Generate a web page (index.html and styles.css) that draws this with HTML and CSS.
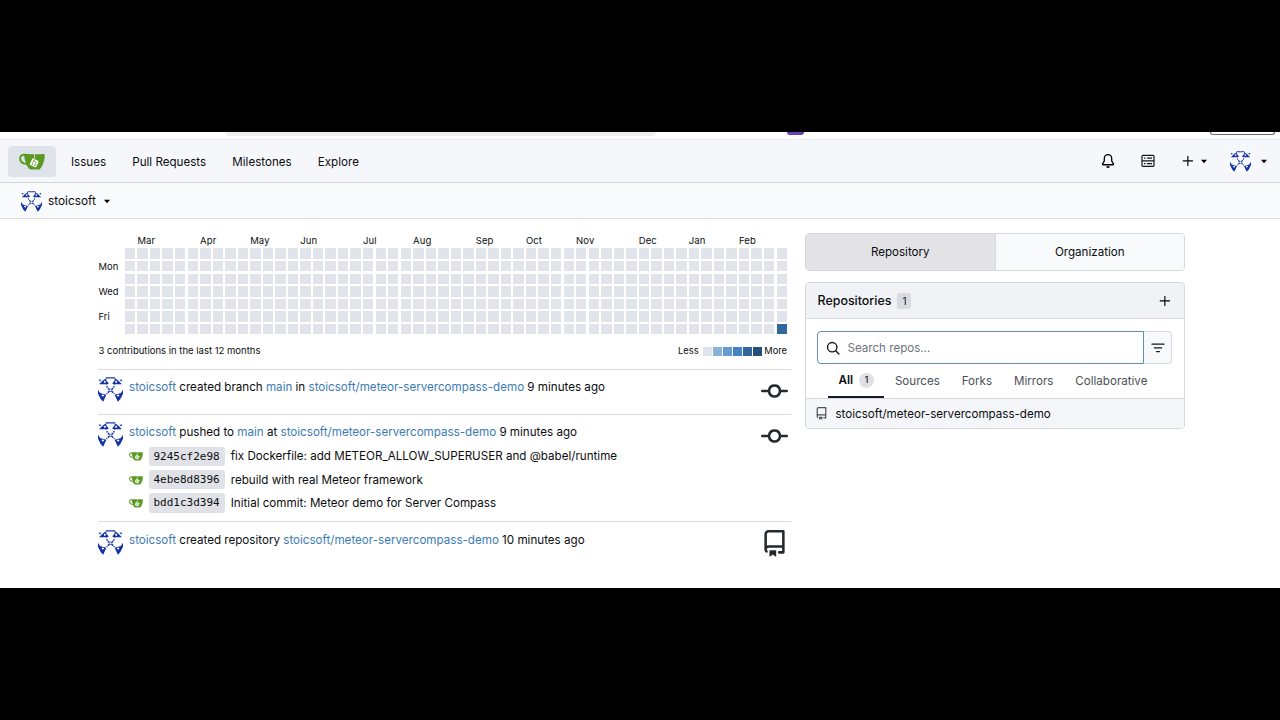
FILE: index.html
```
<!DOCTYPE html>
<html lang="en">
<head>
    <meta charset="UTF-8">
    <meta name="viewport" content="width=device-width, initial-scale=1.0">
    <title>stoicsoft - Dashboard - Gitea</title>
    <link rel="stylesheet" href="styles.css">
</head>
<body>

    <!-- shared icons -->
    <svg width="0" height="0" class="defs">
        <symbol id="gitea" viewBox="0 0 640 640">
            <path fill="#fff" d="m395.9 484.2-126.9-61c-12.5-6-17.9-21.2-11.8-33.8l61-126.9c6-12.5 21.2-17.9 33.8-11.8 17.2 8.3 27.1 13 27.1 13l-.1-109.2 16.7-.1.1 117.1s57.4 24.2 83.1 40.1c3.7 2.3 10.2 6.8 12.9 14.4 2.1 6.1 2 13.1-1 19.3l-61 126.9c-6.2 12.7-21.4 18.1-33.9 12"/>
            <path fill="#5b9a22" d="M622.7 149.8c-4.1-4.1-9.6-4-9.6-4s-117.2 6.6-177.9 8c-13.3.3-26.5.6-39.6.7v117.2c-5.5-2.6-11.1-5.3-16.6-7.9 0-36.4-.1-109.2-.1-109.2-29 .4-89.2-2.2-89.2-2.2s-141.4-7.1-156.8-8.5c-9.8-.6-22.5-2.1-39 1.5-8.7 1.8-33.5 7.4-53.8 26.9C-4.9 212.4 6.6 276.2 8 285.8c1.7 11.7 6.9 44.2 31.7 72.5 45.8 56.1 144.4 54.8 144.4 54.8s12.1 28.9 30.6 55.5c25 33.1 50.7 58.9 75.7 62 63 0 188.9-.1 188.9-.1s12 .1 28.3-10.3c14-8.5 26.5-23.4 26.5-23.4S547 483 565 451.5c5.5-9.7 10.1-19.1 14.1-28 0 0 55.2-117.1 55.2-231.1-1.1-34.5-9.6-40.6-11.6-42.6M125.6 353.9c-25.9-8.5-36.9-18.7-36.9-18.7S69.6 321.8 60 295.4c-16.5-44.2-1.4-71.2-1.4-71.2s8.4-22.5 38.5-30c13.8-3.7 31-3.1 31-3.1s7.1 59.4 15.7 94.2c7.2 29.2 24.8 77.7 24.8 77.7s-26.1-3.1-43-9.1m300.3 107.6s-6.1 14.5-19.6 15.4c-5.8.4-10.3-1.2-10.3-1.2s-.3-.1-5.3-2.1l-112.9-55s-10.9-5.7-12.8-15.6c-2.2-8.1 2.7-18.1 2.7-18.1L322 273s4.8-9.7 12.2-13c.6-.3 2.3-1 4.5-1.5 8.1-2.1 18 2.8 18 2.8L467.4 315s12.6 5.7 15.3 16.2c1.9 7.4-.5 14-1.8 17.2-6.3 15.4-55 113.1-55 113.1"/>
            <path fill="#5b9a22" d="M326.8 380.1c-8.2.1-15.4 5.8-17.3 13.8s2 16.3 9.1 20c7.7 4 17.5 1.8 22.7-5.4 5.1-7.1 4.3-16.9-1.8-23.1l24-49.1c1.5.1 3.7.2 6.2-.5 4.1-.9 7.1-3.6 7.1-3.6 4.2 1.8 8.6 3.8 13.2 6.1 4.8 2.4 9.3 4.9 13.4 7.3.9.5 1.8 1.1 2.8 1.9 1.6 1.3 3.4 3.1 4.7 5.5 1.9 5.5-1.9 14.9-1.9 14.9-2.3 7.6-18.4 40.6-18.4 40.6-8.1-.2-15.3 5-17.7 12.5-2.6 8.1 1.1 17.3 8.9 21.3s17.4 1.7 22.5-5.3c5-6.8 4.6-16.3-1.1-22.6 1.9-3.7 3.7-7.4 5.6-11.3 5-10.4 13.5-30.4 13.5-30.4.9-1.7 5.7-10.3 2.7-21.3-2.5-11.4-12.6-16.7-12.6-16.7-12.2-7.9-29.2-15.2-29.2-15.2s0-4.1-1.1-7.1c-1.1-3.1-2.8-5.1-3.9-6.3 4.7-9.7 9.4-19.3 14.1-29-4.1-2-8.1-4-12.2-6.1-4.8 9.8-9.7 19.7-14.5 29.5-6.7-.1-12.9 3.5-16.1 9.4-3.4 6.3-2.7 14.1 1.9 19.8z"/>
        </symbol>
        <symbol id="identicon-half" viewBox="0 0 36 72" overflow="visible">
            <path fill-rule="evenodd" d="M3 21 13 11 24 3v7l7 9-7 3-3-1zM16 14l4 4 3-4-3-4z"/>
            <path d="M2 7l8 1-5 5zM22 1h14v3H24z"/>
            <path d="M24 26h4v4h-4zM28 31h4v3h4v2h-3v5h3v2h-4v3h-4v-5h3v-5h-3zM24 46h3v4h-3z"/>
            <path fill-rule="evenodd" d="M0 37l6 9 18 5-9 20L8 64 0 48zM10 53l4 4 4-4-4-3z"/>
        </symbol>
        <symbol id="avatar" viewBox="0 0 72 72">
            <rect width="72" height="72" fill="#fff" fill-opacity=".6"/>
            <g fill="#1333a6">
                <use href="#identicon-half" width="36" height="72"/>
                <use href="#identicon-half" width="36" height="72" transform="matrix(-1 0 0 1 72 0)"/>
            </g>
        </symbol>
        <symbol id="caret" viewBox="0 0 8 5">
            <path d="M1 .7h6L4 4.3z"/>
        </symbol>
        <symbol id="plus" viewBox="0 0 16 16">
            <path d="M7.85 2a.65.65 0 0 1 .65.65V7.25h4.65a.65.65 0 0 1 0 1.3H8.5v4.65a.65.65 0 0 1-1.3 0V8.55H2.55a.65.65 0 0 1 0-1.3H7.2V2.65A.65.65 0 0 1 7.85 2"/>
        </symbol>
        <symbol id="commit" viewBox="0 0 16 16">
            <path d="M11.93 8.5a4.002 4.002 0 0 1-7.86 0H.75a.75.75 0 0 1 0-1.5h3.32a4.002 4.002 0 0 1 7.86 0h3.32a.75.75 0 0 1 0 1.5Zm-1.43-.75a2.5 2.5 0 1 0-5 0 2.5 2.5 0 0 0 5 0"/>
        </symbol>
        <symbol id="repo" viewBox="0 0 16 16">
            <path d="M2 2.5A2.5 2.5 0 0 1 4.5 0h8.75a.75.75 0 0 1 .75.75v12.5a.75.75 0 0 1-.75.75h-2.5a.75.75 0 0 1 0-1.5h1.75v-2h-8a1 1 0 0 0-.714 1.7.75.75 0 1 1-1.072 1.05A2.5 2.5 0 0 1 2 11.5Zm10.5-1h-8a1 1 0 0 0-1 1v6.708A2.5 2.5 0 0 1 4.5 9h8ZM5 12.25a.25.25 0 0 1 .25-.25h3.5a.25.25 0 0 1 .25.25v3.25a.25.25 0 0 1-.4.2l-1.45-1.087a.25.25 0 0 0-.3 0L5.4 15.7a.25.25 0 0 1-.4-.2Z"/>
        </symbol>
    </svg>

    <div class="screen">
        <div class="browser">
            <div class="address"></div>
            <div class="extension"></div>
            <div class="profile"></div>
        </div>

        <nav class="navbar">
            <a class="logo"><svg width="26" height="26"><use href="#gitea"/></svg></a>
            <a class="nav-item">Issues</a>
            <a class="nav-item">Pull Requests</a>
            <a class="nav-item">Milestones</a>
            <a class="nav-item">Explore</a>
            <div class="nav-right">
                <svg class="bell" width="14" height="14" viewBox="0 0 16 16"><path d="M8 16a2 2 0 0 0 1.985-1.75c.017-.137-.097-.25-.235-.25h-3.5c-.138 0-.252.113-.235.25A2 2 0 0 0 8 16M3 5a5 5 0 0 1 10 0v2.947q0 .075.042.139l1.703 2.555A1.519 1.519 0 0 1 13.482 13H2.518a1.516 1.516 0 0 1-1.263-2.36l1.703-2.554A.26.26 0 0 0 3 7.947Zm5-3.5A3.5 3.5 0 0 0 4.5 5v2.947c0 .346-.102.683-.294.97l-1.703 2.556a.017.017 0 0 0-.003.01l.001.006q0 .003.004.006l.006.004.007.001h10.964l.007-.001.006-.004.004-.006.001-.007a.017.017 0 0 0-.003-.01l-1.703-2.554a1.75 1.75 0 0 1-.294-.97V5A3.5 3.5 0 0 0 8 1.5"/></svg>
                <svg class="server" width="14" height="14" viewBox="0 0 14 14" fill="none" stroke="#14161a" stroke-width="1.2"><rect x="1" y="1.4" width="12" height="11" rx="1"/><path d="M1 6.9h12M3 4.2h1.4M6 4.2h5M3 9.7h1.4M6 9.7h5"/></svg>
                <svg class="nav-plus" width="14" height="14"><use href="#plus"/></svg>
                <svg class="caret" width="8" height="5"><use href="#caret"/></svg>
                <svg class="nav-avatar" width="21" height="21"><use href="#avatar"/></svg>
                <svg class="caret" width="8" height="5"><use href="#caret"/></svg>
            </div>
        </nav>

        <div class="context-bar">
            <svg width="21" height="21"><use href="#avatar"/></svg>
            <span>stoicsoft</span>
            <svg class="caret" width="8" height="5"><use href="#caret"/></svg>
        </div>

        <main class="dashboard">
            <section class="feed">
                <div class="heatmap" id="heatmap"></div>
                <div class="heatmap-footer">
                    <div>3 contributions in the last 12 months</div>
                    <div class="legend">
                        <span>Less</span>
                        <i class="l0"></i><i class="l1"></i><i class="l2"></i><i class="l3"></i><i class="l4"></i><i class="l5"></i>
                        <span>More</span>
                    </div>
                </div>

                <div class="activity">
                    <svg class="avatar" width="25" height="25"><use href="#avatar"/></svg>
                    <div class="activity-body">
                        <p><a>stoicsoft</a> created branch <a>main</a> in <a>stoicsoft/meteor-servercompass-demo</a> 9 minutes ago</p>
                    </div>
                    <svg class="kind" width="27" height="27"><use href="#commit"/></svg>
                </div>

                <div class="activity pushed">
                    <svg class="avatar" width="25" height="25"><use href="#avatar"/></svg>
                    <div class="activity-body">
                        <p><a>stoicsoft</a> pushed to <a>main</a> at <a>stoicsoft/meteor-servercompass-demo</a> 9 minutes ago</p>
                        <div class="commit">
                            <svg width="14" height="14"><use href="#gitea"/></svg>
                            <code>9245cf2e98</code>
                            <span>fix Dockerfile: add METEOR_ALLOW_SUPERUSER and @babel/runtime</span>
                        </div>
                        <div class="commit">
                            <svg width="14" height="14"><use href="#gitea"/></svg>
                            <code>4ebe8d8396</code>
                            <span>rebuild with real Meteor framework</span>
                        </div>
                        <div class="commit">
                            <svg width="14" height="14"><use href="#gitea"/></svg>
                            <code>bdd1c3d394</code>
                            <span>Initial commit: Meteor demo for Server Compass</span>
                        </div>
                    </div>
                    <svg class="kind" width="27" height="27"><use href="#commit"/></svg>
                </div>

                <div class="activity created">
                    <svg class="avatar" width="25" height="25"><use href="#avatar"/></svg>
                    <div class="activity-body">
                        <p><a>stoicsoft</a> created repository <a>stoicsoft/meteor-servercompass-demo</a> 10 minutes ago</p>
                    </div>
                    <svg class="kind" width="27" height="27"><use href="#repo"/></svg>
                </div>
            </section>

            <aside class="sidebar">
                <div class="switch">
                    <a class="active">Repository</a>
                    <a>Organization</a>
                </div>

                <div class="panel">
                    <div class="panel-header">
                        <b>Repositories</b>
                        <span class="count">1</span>
                        <svg width="14" height="14"><use href="#plus"/></svg>
                    </div>
                    <div class="search">
                        <div class="search-input">
                            <svg width="14" height="14" viewBox="0 0 14 14" fill="none" stroke="#14161a" stroke-width="1.4" stroke-linecap="round"><circle cx="6.2" cy="6.2" r="4.7"/><path d="M9.7 9.7l3.2 3.2"/></svg>
                            <span>Search repos…</span>
                        </div>
                        <div class="search-filter">
                            <svg width="14" height="10" viewBox="0 0 14 10" stroke="#14161a" stroke-width="1.3" stroke-linecap="round"><path d="M1 1.2h12M3.4 4.9h7.2M5.6 8.6h2.8"/></svg>
                        </div>
                    </div>
                    <div class="tabs">
                        <a class="active">All <span class="round">1</span></a>
                        <a>Sources</a>
                        <a>Forks</a>
                        <a>Mirrors</a>
                        <a>Collaborative</a>
                    </div>
                    <div class="repo">
                        <svg width="13" height="13"><use href="#repo"/></svg>
                        <span>stoicsoft/meteor-servercompass-demo</span>
                    </div>
                </div>
            </aside>
        </main>
    </div>

    <script src="heatmap.js"></script>
</body>
</html>
```
FILE: styles.css
```
* {
    box-sizing: border-box;
}

body {
    margin: 0;
    height: 100vh;
    background: #000;
    color: #0b0d10;
    font-family: Inter, "Liberation Sans", sans-serif;
    font-size: 11.6px;
    line-height: 18px;
    display: flex;
    align-items: center;
    overflow: hidden;
}

.defs {
    position: absolute;
}

svg {
    display: block;
    flex: none;
}

.screen {
    width: 1280px;
    height: 456px;
    background: #fff;
    overflow: hidden;
}

/* bottom edge of the browser toolbar */
.browser {
    height: 8px;
    display: flex;
    align-items: flex-start;
    border-bottom: 1px solid #ececee;
}

.address {
    width: 430px;
    height: 4px;
    margin-left: 226px;
    background: #eeeef0;
    border-radius: 0 0 6px 6px;
}

.extension {
    width: 17px;
    height: 3px;
    margin-left: 131px;
    background: #6a3fb5;
    border-radius: 0 0 3px 3px;
}

.profile {
    width: 65px;
    height: 3px;
    margin-left: 406px;
    border: 1px solid #5f6b62;
    border-top: 0;
    border-radius: 0 0 6px 6px;
}

/* navbar */
.navbar {
    height: 43px;
    padding: 0 12px 0 8px;
    display: flex;
    align-items: center;
    gap: 2px;
    background: #f6f7fa;
    border-bottom: 1px solid #d2d5db;
}

.logo {
    width: 48px;
    height: 31px;
    display: flex;
    align-items: center;
    justify-content: center;
    background: #dfe3ea;
    border-radius: 4px;
}

.nav-item {
    padding: 1px 11.2px 0 13px;
}

.nav-right {
    margin-left: auto;
    display: flex;
    align-items: center;
}

.server {
    margin-left: 26px;
}

.nav-plus {
    margin-left: 25.5px;
}

.nav-plus + .caret {
    margin-left: 5.5px;
}

.nav-avatar {
    margin-left: 22px;
    margin-right: 9px;
}

.context-bar {
    height: 36px;
    padding: 1px 0 0 21px;
    display: flex;
    align-items: center;
    gap: 6px;
    background: #f9fafc;
    border-bottom: 1px solid #dcdee3;
}

.context-bar span {
    font-size: 11.85px;
}

.context-bar .caret {
    margin-left: 1.5px;
}

.dashboard {
    display: flex;
    gap: 14px;
    padding: 14px 95px 0 98px;
}

.feed {
    width: 693px;
}

.heatmap {
    display: grid;
    grid-template-columns: 24.4px repeat(53, 1fr);
    grid-template-rows: 13.4px repeat(7, 10.45px);
    gap: 2.1px;
    padding: 0 4px 0 0.4px;
    font-size: 9.5px;
    line-height: 15px;
    letter-spacing: 0.1px;
}

.heatmap i {
    background: #e2e4eb;
}

.heatmap i.l4,
.legend .l4 {
    background: #31679f;
}

.heatmap span {
    white-space: nowrap;
    width: 0;
}

.heatmap .day {
    line-height: 11px;
    font-size: 9.4px;
}

.heatmap-footer {
    height: 35px;
    padding: 0 4px 1px 0.5px;
    display: flex;
    justify-content: space-between;
    align-items: center;
    font-size: 9.5px;
}

.legend {
    display: flex;
    align-items: center;
    gap: 1.1px;
    font-size: 9.3px;
}

.legend span:first-child {
    margin-right: 3px;
}

.legend span:last-child {
    margin-left: 1px;
}

.legend i {
    width: 9px;
    height: 9px;
}

.legend .l0 { background: #e2e4eb; }
.legend .l1 { background: #8ab3dc; }
.legend .l2 { background: #659bd1; }
.legend .l3 { background: #4183c4; }
.legend .l5 { background: #254f7b; }

/* activity feed */
.activity {
    height: 44.5px;
    padding: 7px 3px 0 0;
    display: flex;
    align-items: flex-start;
    border-top: 1px solid #dcdee2;
}

.activity.pushed {
    height: 107.5px;
}

.activity.created {
    padding-top: 8px;
}

.activity-body {
    flex: 1;
    padding: 1px 0 0 6px;
    font-size: 11.62px;
}

.activity p {
    margin: 0;
}

.activity a {
    color: #3d7cb5;
}

.kind {
    margin-top: 1px;
    fill: #24292e;
}

.created .kind {
    margin-top: 0;
}

.commit {
    height: 23.4px;
    display: flex;
    align-items: center;
}

.pushed p {
    margin-bottom: 4px;
}

.commit code {
    height: 19.5px;
    margin: 0 6px 0 5.5px;
    padding: 0 5px;
    background: #e1e2e7;
    border-radius: 3px;
    font: 11px/19.5px "DejaVu Sans Mono", "Liberation Mono", monospace;
}

/* sidebar */
.sidebar {
    width: 380px;
}

.switch {
    height: 38px;
    display: flex;
    border: 1px solid #d6d8de;
    border-radius: 4px;
    overflow: hidden;
}

.switch a {
    flex: 1;
    line-height: 37px;
    text-align: center;
    background: #f8f9fb;
}

.switch a.active {
    background: #e3e2e7;
    border-right: 1px solid #d6d8de;
}

.panel {
    margin-top: 11px;
    border: 1px solid #d6d8de;
    border-radius: 4px;
    overflow: hidden;
}

.panel-header {
    height: 36px;
    padding: 0 12px 0 11.5px;
    display: flex;
    align-items: center;
    background: #f1f2f5;
    border-bottom: 1px solid #d6d8de;
}

.panel-header b {
    font-size: 12.45px;
    font-weight: 500;
}

.panel-header svg {
    margin-left: auto;
}

.count {
    width: 14px;
    height: 16px;
    margin-left: 6px;
    background: #d8dbe1;
    border-radius: 3px;
    font-size: 10px;
    line-height: 16px;
    text-align: center;
}

.search {
    height: 33px;
    margin: 12px 12px 0 11px;
    display: flex;
}

.search-input {
    flex: 1;
    padding-left: 8px;
    display: flex;
    align-items: center;
    gap: 7.5px;
    border: 1px solid #5c8fb0;
    border-radius: 4px 0 0 4px;
    color: #6f747b;
}

.search-filter {
    width: 28px;
    display: flex;
    align-items: center;
    justify-content: center;
    background: #f8f9fb;
    border: 1px solid #d6d8de;
    border-left: 0;
    border-radius: 0 4px 4px 0;
}

.tabs {
    height: 35px;
    padding: 0 22px;
    display: flex;
    border-bottom: 1px solid #d6d8de;
    color: #4b5057;
}

.tabs a {
    height: 34px;
    padding: 0 11px 0 10.9px;
    line-height: 34px;
}

.tabs a.active {
    width: 56px;
    display: flex;
    align-items: center;
    gap: 6px;
    padding: 0 0 0 10.5px;
    color: #0b0d10;
    font-weight: 600;
    border-bottom: 2px solid #1a1d22;
}

.round {
    width: 15px;
    height: 15px;
    background: #e0e1e6;
    border-radius: 50%;
    font-size: 8.5px;
    font-weight: 500;
    line-height: 15px;
    text-align: center;
}

.repo {
    height: 29px;
    padding-left: 8.5px;
    display: flex;
    align-items: center;
    gap: 8px;
    background: #f5f6f9;
}

.repo svg {
    fill: #4b5057;
}
```
FILE: heatmap.js
```
var months = {Mar: 1, Apr: 6, May: 10, Jun: 14, Jul: 19, Aug: 23, Sep: 28, Oct: 32, Nov: 36, Dec: 41, Jan: 45, Feb: 49};
var days = {Mon: 1, Wed: 3, Fri: 5};
var html = '';

for (var m in months) {
    html += '<span style="grid-area: 1 / ' + (months[m] + 2) + '">' + m + '</span>';
}
for (var d in days) {
    html += '<span class="day" style="grid-area: ' + (days[d] + 2) + ' / 1">' + d + '</span>';
}
for (var week = 0; week < 53; week++) {
    for (var day = 0; day < 7; day++) {
        var level = week === 52 && day === 6 ? 'l4' : 'l0';
        html += '<i class="' + level + '" style="grid-area: ' + (day + 2) + ' / ' + (week + 2) + '"></i>';
    }
}
document.getElementById('heatmap').innerHTML = html;
```
